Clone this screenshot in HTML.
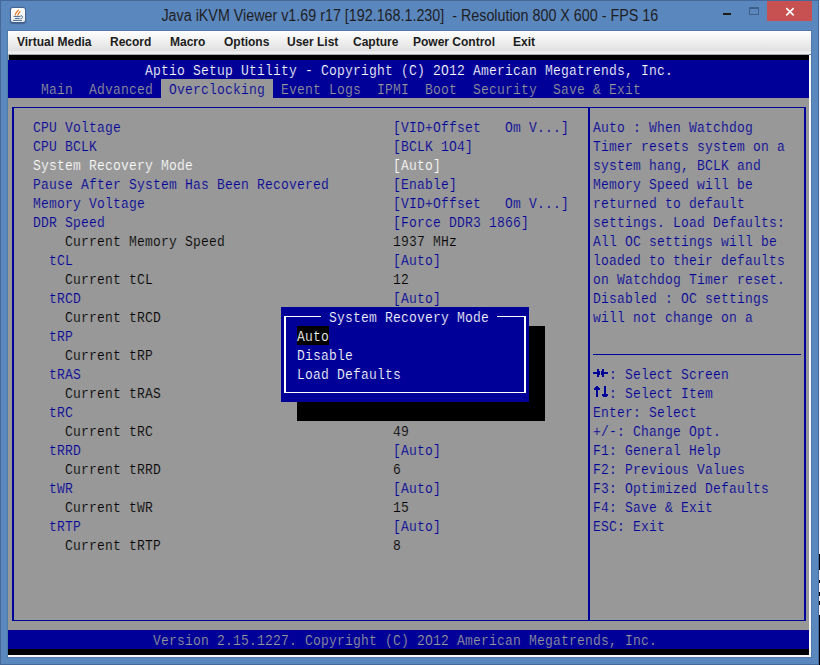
<!DOCTYPE html>
<html><head><meta charset="utf-8">
<style>
html,body{margin:0;padding:0;}
body{width:820px;height:665px;position:relative;overflow:hidden;background:#5b87bf;font-family:"Liberation Sans",sans-serif;}
div{position:absolute;}
.t{font-family:"Liberation Mono",monospace;font-size:13.0px;letter-spacing:0.200px;line-height:19px;white-space:pre;transform:scaleY(1.15);transform-origin:0 0;}
.title{left:0;top:6px;width:820px;text-align:center;font-size:16px;color:#1e1e1e;line-height:20px;white-space:pre;}
.menu{left:8px;top:31px;width:803px;height:23px;background:linear-gradient(#ffffff,#f6f6f6 25%,#e0e0e0 88%,#f0f0f0 90%,#eeeeee 100%);}
.mi{top:4px;font-size:12px;font-weight:bold;color:#1c1c1c;white-space:pre;line-height:14px;}
</style></head><body>
<div style="left:0;top:0;width:820px;height:1px;background:#44699a"></div>
<div style="left:0;top:0;width:1px;height:665px;background:#44699a"></div>
<div style="left:818px;top:0;width:1px;height:665px;background:#44699a"></div>
<div style="left:819px;top:0;width:1px;height:665px;background:linear-gradient(#f4f4f4 0 554px,#000 554px 570px,#f4f4f4 570px 580px,#000 580px 583px,#f4f4f4 583px 592px,#000 592px 596px,#f4f4f4 596px 601px,#000 601px 605px,#f4f4f4 605px 615px,#000 615px)"></div>
<div style="left:0;top:664px;width:818px;height:1px;background:#44699a"></div>
<div style="left:7px;top:30px;width:805px;height:1px;background:#4f78ad"></div>
<div style="left:7px;top:30px;width:1px;height:627px;background:#4f78ad"></div>
<div style="left:7px;top:657px;width:805px;height:1px;background:#527bb0"></div>
<div style="left:811px;top:30px;width:1px;height:628px;background:#4f78ad"></div>
<div class="title"><span id="tt" style="display:inline-block;transform:scaleX(0.894);transform-origin:50% 50%">Java iKVM Viewer v1.69 r17 [192.168.1.230]  - Resolution 800 X 600 - FPS 16</span></div>
<div style="left:723px;top:13px;width:8px;height:2px;background:#1e1a14"></div>
<div style="left:749px;top:7px;width:8px;height:5px;border:1px solid #3d5f8a;border-top-width:2px"></div>
<div style="left:767px;top:1px;width:45px;height:20px;background:#c75050">
<svg width="45" height="20" style="position:absolute;left:0;top:0"><path d="M19.3 7.2 L26.7 14.3 M26.7 7.2 L19.3 14.3" stroke="#fff" stroke-width="1.6" fill="none"/></svg></div>
<div style="left:11px;top:8px;width:14px;height:14px;border-radius:2px;background:linear-gradient(#ffffff,#ececec);box-shadow:0 0.5px 1px 1px rgba(40,60,90,0.5)">
<svg width="14" height="14" style="position:absolute;left:0;top:0">
<path d="M4.6 7.2 C3.8 5.6 5.6 4.2 7.6 1.8 M7 7.4 C6.4 6 8 5 9.2 3.4" stroke="#e8731a" stroke-width="1.2" fill="none"/>
<path d="M2.6 8.4 H9.6 M4 10.4 H8.6 M2 12.4 H11" stroke="#44688e" stroke-width="1" fill="none"/>
<path d="M9.8 7.6 C12.2 7.8 12.2 10.4 9.6 10.6" stroke="#44688e" stroke-width="1" fill="none"/>
</svg></div>
<div class="menu">
<div class="mi" style="left:9px">Virtual Media</div>
<div class="mi" style="left:102px">Record</div>
<div class="mi" style="left:162px">Macro</div>
<div class="mi" style="left:216px">Options</div>
<div class="mi" style="left:279px">User List</div>
<div class="mi" style="left:345px">Capture</div>
<div class="mi" style="left:405px">Power Control</div>
<div class="mi" style="left:505px">Exit</div>
</div>
<div style="left:8px;top:55px;width:803px;height:602px;background:#f8f8f8"></div>
<div style="left:8px;top:55px;width:801px;height:600px;background:#000"></div>
<div style="left:8px;top:54px;width:801px;height:1px;background:#a6adb4"></div>
<div style="left:8px;top:55px;width:1px;height:5px;background:#8a9bb0"></div>
<div style="left:8px;top:60px;width:801px;height:38px;background:#000098;"></div>
<div style="left:8px;top:98px;width:801px;height:532px;background:#989898;"></div>
<div style="left:8px;top:630px;width:801px;height:19px;background:#000098;"></div>
<div class="t" style="left:145px;top:60.0px;color:#ffffff;-webkit-text-stroke:0.18px #000098">Aptio Setup Utility - Copyright (C) 2O12 American Megatrends, Inc.</div>
<div style="left:161px;top:79px;width:112px;height:19px;background:#989898;"></div>
<div class="t" style="left:41px;top:79.0px;color:#989898;-webkit-text-stroke:0.18px #000098">Main</div>
<div class="t" style="left:89px;top:79.0px;color:#989898;-webkit-text-stroke:0.18px #000098">Advanced</div>
<div class="t" style="left:281px;top:79.0px;color:#989898;-webkit-text-stroke:0.18px #000098">Event Logs</div>
<div class="t" style="left:377px;top:79.0px;color:#989898;-webkit-text-stroke:0.18px #000098">IPMI</div>
<div class="t" style="left:425px;top:79.0px;color:#989898;-webkit-text-stroke:0.18px #000098">Boot</div>
<div class="t" style="left:473px;top:79.0px;color:#989898;-webkit-text-stroke:0.18px #000098">Security</div>
<div class="t" style="left:553px;top:79.0px;color:#989898;-webkit-text-stroke:0.18px #000098">Save &amp; Exit</div>
<div class="t" style="left:169px;top:79.0px;color:#000098;-webkit-text-stroke:0.18px #989898">Overclocking</div>
<div style="left:12px;top:107px;width:794px;height:1px;background:#000098;"></div>
<div style="left:12px;top:620px;width:794px;height:1px;background:#000098;"></div>
<div style="left:12px;top:107px;width:2px;height:514px;background:#000098;"></div>
<div style="left:804px;top:107px;width:2px;height:514px;background:#000098;"></div>
<div style="left:588px;top:107px;width:2px;height:514px;background:#000098;"></div>
<div style="left:593px;top:354px;width:208px;height:1px;background:#000098;"></div>
<div class="t" style="left:33px;top:117.0px;color:#000098;-webkit-text-stroke:0.18px #989898">CPU Voltage</div>
<div class="t" style="left:393px;top:117.0px;color:#000098;-webkit-text-stroke:0.18px #989898">[VID+Offset   Om V...]</div>
<div class="t" style="left:33px;top:136.0px;color:#000098;-webkit-text-stroke:0.18px #989898">CPU BCLK</div>
<div class="t" style="left:393px;top:136.0px;color:#000098;-webkit-text-stroke:0.18px #989898">[BCLK 1O4]</div>
<div class="t" style="left:33px;top:155.0px;color:#ffffff;-webkit-text-stroke:0.18px #989898">System Recovery Mode</div>
<div class="t" style="left:393px;top:155.0px;color:#ffffff;-webkit-text-stroke:0.18px #989898">[Auto]</div>
<div class="t" style="left:33px;top:174.0px;color:#000098;-webkit-text-stroke:0.18px #989898">Pause After System Has Been Recovered</div>
<div class="t" style="left:393px;top:174.0px;color:#000098;-webkit-text-stroke:0.18px #989898">[Enable]</div>
<div class="t" style="left:33px;top:193.0px;color:#000098;-webkit-text-stroke:0.18px #989898">Memory Voltage</div>
<div class="t" style="left:393px;top:193.0px;color:#000098;-webkit-text-stroke:0.18px #989898">[VID+Offset   Om V...]</div>
<div class="t" style="left:33px;top:212.0px;color:#000098;-webkit-text-stroke:0.18px #989898">DDR Speed</div>
<div class="t" style="left:393px;top:212.0px;color:#000098;-webkit-text-stroke:0.18px #989898">[Force DDR3 1866]</div>
<div class="t" style="left:65px;top:231.0px;color:#000000;-webkit-text-stroke:0.18px #989898">Current Memory Speed</div>
<div class="t" style="left:393px;top:231.0px;color:#000000;-webkit-text-stroke:0.18px #989898">1937 MHz</div>
<div class="t" style="left:49px;top:250.0px;color:#000098;-webkit-text-stroke:0.18px #989898">tCL</div>
<div class="t" style="left:393px;top:250.0px;color:#000098;-webkit-text-stroke:0.18px #989898">[Auto]</div>
<div class="t" style="left:65px;top:269.0px;color:#000000;-webkit-text-stroke:0.18px #989898">Current tCL</div>
<div class="t" style="left:393px;top:269.0px;color:#000000;-webkit-text-stroke:0.18px #989898">12</div>
<div class="t" style="left:49px;top:288.0px;color:#000098;-webkit-text-stroke:0.18px #989898">tRCD</div>
<div class="t" style="left:393px;top:288.0px;color:#000098;-webkit-text-stroke:0.18px #989898">[Auto]</div>
<div class="t" style="left:65px;top:307.0px;color:#000000;-webkit-text-stroke:0.18px #989898">Current tRCD</div>
<div class="t" style="left:49px;top:326.0px;color:#000098;-webkit-text-stroke:0.18px #989898">tRP</div>
<div class="t" style="left:65px;top:345.0px;color:#000000;-webkit-text-stroke:0.18px #989898">Current tRP</div>
<div class="t" style="left:49px;top:364.0px;color:#000098;-webkit-text-stroke:0.18px #989898">tRAS</div>
<div class="t" style="left:65px;top:383.0px;color:#000000;-webkit-text-stroke:0.18px #989898">Current tRAS</div>
<div class="t" style="left:49px;top:402.0px;color:#000098;-webkit-text-stroke:0.18px #989898">tRC</div>
<div class="t" style="left:65px;top:421.0px;color:#000000;-webkit-text-stroke:0.18px #989898">Current tRC</div>
<div class="t" style="left:393px;top:421.0px;color:#000000;-webkit-text-stroke:0.18px #989898">49</div>
<div class="t" style="left:49px;top:440.0px;color:#000098;-webkit-text-stroke:0.18px #989898">tRRD</div>
<div class="t" style="left:393px;top:440.0px;color:#000098;-webkit-text-stroke:0.18px #989898">[Auto]</div>
<div class="t" style="left:65px;top:459.0px;color:#000000;-webkit-text-stroke:0.18px #989898">Current tRRD</div>
<div class="t" style="left:393px;top:459.0px;color:#000000;-webkit-text-stroke:0.18px #989898">6</div>
<div class="t" style="left:49px;top:478.0px;color:#000098;-webkit-text-stroke:0.18px #989898">tWR</div>
<div class="t" style="left:393px;top:478.0px;color:#000098;-webkit-text-stroke:0.18px #989898">[Auto]</div>
<div class="t" style="left:65px;top:497.0px;color:#000000;-webkit-text-stroke:0.18px #989898">Current tWR</div>
<div class="t" style="left:393px;top:497.0px;color:#000000;-webkit-text-stroke:0.18px #989898">15</div>
<div class="t" style="left:49px;top:516.0px;color:#000098;-webkit-text-stroke:0.18px #989898">tRTP</div>
<div class="t" style="left:393px;top:516.0px;color:#000098;-webkit-text-stroke:0.18px #989898">[Auto]</div>
<div class="t" style="left:65px;top:535.0px;color:#000000;-webkit-text-stroke:0.18px #989898">Current tRTP</div>
<div class="t" style="left:393px;top:535.0px;color:#000000;-webkit-text-stroke:0.18px #989898">8</div>
<div class="t" style="left:593px;top:117.0px;color:#000098;-webkit-text-stroke:0.18px #989898">Auto : When Watchdog</div>
<div class="t" style="left:593px;top:136.0px;color:#000098;-webkit-text-stroke:0.18px #989898">Timer resets system on a</div>
<div class="t" style="left:593px;top:155.0px;color:#000098;-webkit-text-stroke:0.18px #989898">system hang, BCLK and</div>
<div class="t" style="left:593px;top:174.0px;color:#000098;-webkit-text-stroke:0.18px #989898">Memory Speed will be</div>
<div class="t" style="left:593px;top:193.0px;color:#000098;-webkit-text-stroke:0.18px #989898">returned to default</div>
<div class="t" style="left:593px;top:212.0px;color:#000098;-webkit-text-stroke:0.18px #989898">settings. Load Defaults:</div>
<div class="t" style="left:593px;top:231.0px;color:#000098;-webkit-text-stroke:0.18px #989898">All OC settings will be</div>
<div class="t" style="left:593px;top:250.0px;color:#000098;-webkit-text-stroke:0.18px #989898">loaded to their defaults</div>
<div class="t" style="left:593px;top:269.0px;color:#000098;-webkit-text-stroke:0.18px #989898">on Watchdog Timer reset.</div>
<div class="t" style="left:593px;top:288.0px;color:#000098;-webkit-text-stroke:0.18px #989898">Disabled : OC settings</div>
<div class="t" style="left:593px;top:307.0px;color:#000098;-webkit-text-stroke:0.18px #989898">will not change on a</div>
<div class="t" style="left:593px;top:364.0px;color:#000098;-webkit-text-stroke:0.18px #989898">  : Select Screen</div>
<div class="t" style="left:593px;top:383.0px;color:#000098;-webkit-text-stroke:0.18px #989898">  : Select Item</div>
<div class="t" style="left:593px;top:402.0px;color:#000098;-webkit-text-stroke:0.18px #989898">Enter: Select</div>
<div class="t" style="left:593px;top:421.0px;color:#000098;-webkit-text-stroke:0.18px #989898">+/-: Change Opt.</div>
<div class="t" style="left:593px;top:440.0px;color:#000098;-webkit-text-stroke:0.18px #989898">F1: General Help</div>
<div class="t" style="left:593px;top:459.0px;color:#000098;-webkit-text-stroke:0.18px #989898">F2: Previous Values</div>
<div class="t" style="left:593px;top:478.0px;color:#000098;-webkit-text-stroke:0.18px #989898">F3: Optimized Defaults</div>
<div class="t" style="left:593px;top:497.0px;color:#000098;-webkit-text-stroke:0.18px #989898">F4: Save &amp; Exit</div>
<div class="t" style="left:593px;top:516.0px;color:#000098;-webkit-text-stroke:0.18px #989898">ESC: Exit</div>
<svg width="16" height="38" style="position:absolute;left:593px;top:364px" shape-rendering="crispEdges"><g fill="#000098"><rect x="0" y="8" width="7" height="2"/><rect x="4" y="5" width="2" height="8"/><rect x="6" y="7" width="1" height="4"/><rect x="8" y="8" width="7" height="2"/><rect x="9" y="5" width="2" height="8"/><rect x="8" y="7" width="1" height="4"/><rect x="3" y="22" width="2" height="11"/><rect x="1" y="24" width="6" height="2"/><rect x="2" y="23" width="4" height="1"/><rect x="11" y="22" width="2" height="11"/><rect x="9" y="30" width="6" height="2"/><rect x="10" y="32" width="4" height="1"/></g></svg>
<div class="t" style="left:153px;top:630.0px;color:#989898;-webkit-text-stroke:0.18px #000098">Version 2.15.1227. Copyright (C) 2O12 American Megatrends, Inc.</div>
<div style="left:297px;top:326px;width:248px;height:95px;background:#000000;"></div>
<div style="left:281px;top:307px;width:248px;height:95px;background:#000098;"></div>
<div style="left:284px;top:316px;width:37px;height:1px;background:#ffffff;"></div>
<div style="left:497px;top:316px;width:29px;height:1px;background:#ffffff;"></div>
<div style="left:284px;top:392px;width:242px;height:1px;background:#ffffff;"></div>
<div style="left:284px;top:316px;width:2px;height:77px;background:#ffffff;"></div>
<div style="left:524px;top:316px;width:2px;height:77px;background:#ffffff;"></div>
<div class="t" style="left:329px;top:307.0px;color:#ffffff;-webkit-text-stroke:0.18px #000098">System Recovery Mode</div>
<div style="left:297px;top:326px;width:32px;height:19px;background:#000000;"></div>
<div class="t" style="left:297px;top:326.0px;color:#ffffff;-webkit-text-stroke:0.18px #000000">Auto</div>
<div class="t" style="left:297px;top:345.0px;color:#ffffff;-webkit-text-stroke:0.18px #000098">Disable</div>
<div class="t" style="left:297px;top:364.0px;color:#ffffff;-webkit-text-stroke:0.18px #000098">Load Defaults</div>
</body></html>
